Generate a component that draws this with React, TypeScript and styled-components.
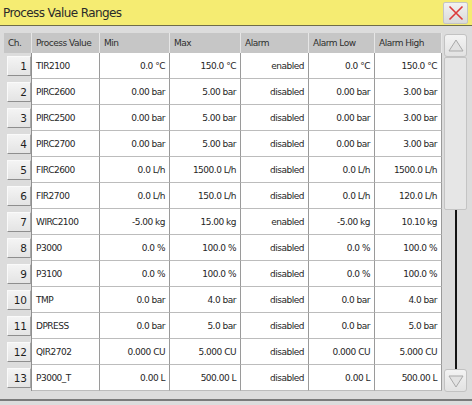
import React from 'react';
import styled, { createGlobalStyle } from 'styled-components';

type Row = {
  ch: number;
  name: string;
  min: string;
  max: string;
  alarm: string;
  low: string;
  high: string;
};

const rows: Row[] = [
  { ch: 1, name: 'TIR2100', min: '0.0 °C', max: '150.0 °C', alarm: 'enabled', low: '0.0 °C', high: '150.0 °C' },
  { ch: 2, name: 'PIRC2600', min: '0.00 bar', max: '5.00 bar', alarm: 'disabled', low: '0.00 bar', high: '3.00 bar' },
  { ch: 3, name: 'PIRC2500', min: '0.00 bar', max: '5.00 bar', alarm: 'disabled', low: '0.00 bar', high: '3.00 bar' },
  { ch: 4, name: 'PIRC2700', min: '0.00 bar', max: '5.00 bar', alarm: 'disabled', low: '0.00 bar', high: '3.00 bar' },
  { ch: 5, name: 'FIRC2600', min: '0.0 L/h', max: '1500.0 L/h', alarm: 'disabled', low: '0.0 L/h', high: '1500.0 L/h' },
  { ch: 6, name: 'FIR2700', min: '0.0 L/h', max: '150.0 L/h', alarm: 'disabled', low: '0.0 L/h', high: '120.0 L/h' },
  { ch: 7, name: 'WIRC2100', min: '-5.00 kg', max: '15.00 kg', alarm: 'enabled', low: '-5.00 kg', high: '10.10 kg' },
  { ch: 8, name: 'P3000', min: '0.0 %', max: '100.0 %', alarm: 'disabled', low: '0.0 %', high: '100.0 %' },
  { ch: 9, name: 'P3100', min: '0.0 %', max: '100.0 %', alarm: 'disabled', low: '0.0 %', high: '100.0 %' },
  { ch: 10, name: 'TMP', min: '0.0 bar', max: '4.0 bar', alarm: 'disabled', low: '0.0 bar', high: '4.0 bar' },
  { ch: 11, name: 'DPRESS', min: '0.0 bar', max: '5.0 bar', alarm: 'disabled', low: '0.0 bar', high: '5.0 bar' },
  { ch: 12, name: 'QIR2702', min: '0.000 CU', max: '5.000 CU', alarm: 'disabled', low: '0.000 CU', high: '5.000 CU' },
  { ch: 13, name: 'P3000_T', min: '0.00 L', max: '500.00 L', alarm: 'disabled', low: '0.00 L', high: '500.00 L' },
];

const GlobalStyle = createGlobalStyle`
  html, body { margin: 0; padding: 0; background: #dcdcdc; }
  body { font-family: "DejaVu Sans", "Liberation Sans", sans-serif; }
`;

const Window = styled.div`
  width: 472px;
  height: 405px;
  display: flex;
  flex-direction: column;
  background: #dcdcdc;
  overflow: hidden;
`;

const TitleBar = styled.div`
  height: 25px;
  flex: none;
  display: flex;
  align-items: center;
  justify-content: space-between;
  background: #f5ec72;
  border-bottom: 1px solid #6f6c48;
  padding: 0 2px 0 3px;
`;

const Title = styled.h1`
  margin: 0;
  font-size: 12px;
  letter-spacing: -0.6px;
  font-weight: normal;
  color: #2a2a2a;
`;

const CloseButton = styled.button`
  width: 25px;
  height: 22px;
  margin-right: 2px;
  padding: 0;
  display: flex;
  align-items: center;
  justify-content: center;
  background: linear-gradient(#f2f2f2, #dadada);
  border: 1px solid #c4c4c4;
  border-radius: 2px;
`;

const Body = styled.div`
  flex: 1;
  display: flex;
  align-items: flex-start;
  gap: 2px;
  padding: 7px 0 0 4px;
  border-bottom: 2px solid #7a7a7a;
  margin-bottom: 4px;
`;

const Grid = styled.div`
  display: grid;
  grid-template-columns: 28px 68px 70px 71px 68px 66px 67px;
  grid-auto-rows: 26px;
  grid-template-rows: 20px;
  width: 438px;
  font-size: 9px;
  letter-spacing: -0.5px;
  color: #262626;
`;

const HeadCell = styled.div`
  display: flex;
  align-items: center;
  padding-left: 4px;
  background: #c6c6c6;
  border-right: 1px solid #e6e6e6;
  color: #2e2e2e;
  white-space: nowrap;
  overflow: hidden;
`;

const ChCell = styled.div`
  display: flex;
  align-items: flex-start;
  padding: 3px 0 0 3px;
  background: #dcdcdc;
  border-right: 1px solid #8f8f8f;
`;

const ChButton = styled.div`
  width: 24px;
  height: 20px;
  box-sizing: border-box;
  display: flex;
  align-items: center;
  justify-content: flex-end;
  padding-right: 3px;
  background: linear-gradient(#f4f4f4, #e4e4e4);
  border-top: 1px solid #fafafa;
  border-left: 1px solid #fafafa;
  border-right: 1px solid #a6a6a6;
  border-bottom: 1px solid #8e8e8e;
  font-size: 10.5px;
  letter-spacing: 0;
  color: #1e1e1e;
`;

const Cell = styled.div<{ $align?: 'left' | 'right' }>`
  display: flex;
  align-items: center;
  justify-content: ${(p) => (p.$align === 'left' ? 'flex-start' : 'flex-end')};
  padding: 0 4px;
  background: #ffffff;
  border-right: 1px solid #9a9a9a;
  border-bottom: 1px solid #bcbcbc;
  white-space: nowrap;
`;

const ScrollBar = styled.div`
  width: 23px;
  height: 358px;
  display: flex;
  flex-direction: column;
  margin-top: 1px;
`;

const ArrowButton = styled.div`
  height: 23px;
  flex: none;
  display: flex;
  align-items: center;
  justify-content: center;
  background: linear-gradient(#f3f3f3, #e2e2e2);
  border: 1px solid #c2c2c2;
  border-radius: 3px;
  box-sizing: border-box;
`;

const Track = styled.div`
  flex: 1;
  display: flex;
  flex-direction: column;
  align-items: center;
`;

const Thumb = styled.div`
  align-self: stretch;
  height: 153px;
  background: #e6e6e6;
  border: 1px solid #c4c4c4;
  border-radius: 2px;
  box-sizing: border-box;
`;

const TrackLine = styled.div`
  flex: 1;
  width: 2px;
  background: #141414;
`;

const Triangle: React.FC<{ down?: boolean }> = ({ down }) => (
  <svg width="16" height="14" viewBox="0 0 16 14">
    <polygon
      points={down ? '1,2 15,2 8,13' : '1,12 15,12 8,1'}
      fill="#e2e2e2"
      stroke="#a9a9a9"
      strokeWidth="1"
    />
  </svg>
);

const App: React.FC = () => (
  <Window>
    <GlobalStyle />
    <TitleBar>
      <Title>Process Value Ranges</Title>
      <CloseButton aria-label="close">
        <svg width="16" height="16" viewBox="0 0 16 16">
          <path d="M1.5 1.5 L14.5 14.5 M14.5 1.5 L1.5 14.5" stroke="#dc3a3a" strokeWidth="1.6" />
        </svg>
      </CloseButton>
    </TitleBar>
    <Body>
      <Grid>
        <HeadCell>Ch.</HeadCell>
        <HeadCell>Process Value</HeadCell>
        <HeadCell>Min</HeadCell>
        <HeadCell>Max</HeadCell>
        <HeadCell>Alarm</HeadCell>
        <HeadCell>Alarm Low</HeadCell>
        <HeadCell>Alarm High</HeadCell>
        {rows.map((r) => (
          <React.Fragment key={r.ch}>
            <ChCell>
              <ChButton>{r.ch}</ChButton>
            </ChCell>
            <Cell $align="left">{r.name}</Cell>
            <Cell>{r.min}</Cell>
            <Cell>{r.max}</Cell>
            <Cell>{r.alarm}</Cell>
            <Cell>{r.low}</Cell>
            <Cell>{r.high}</Cell>
          </React.Fragment>
        ))}
      </Grid>
      <ScrollBar>
        <ArrowButton>
          <Triangle />
        </ArrowButton>
        <Track>
          <Thumb />
          <TrackLine />
        </Track>
        <ArrowButton>
          <Triangle down />
        </ArrowButton>
      </ScrollBar>
    </Body>
  </Window>
);

export default App;
